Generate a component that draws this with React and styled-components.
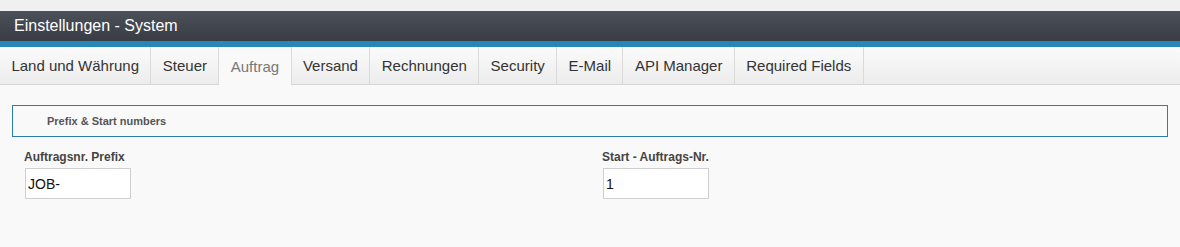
import React from "react";
import styled, { createGlobalStyle } from "styled-components";

const GlobalStyle = createGlobalStyle`
  body {
    margin: 0;
    background: #f9f9f9;
    font-family: "Liberation Sans", Arial, sans-serif;
  }
`;

const Page = styled.div`
  width: 1180px;
  height: 247px;
  background: #f9f9f9;
  overflow: hidden;
`;

const TopStrip = styled.div`
  height: 11px;
  background: #f0f0f0;
`;

const Header = styled.div`
  height: 30px;
  background: linear-gradient(#4c5059, #383c44);
  border-bottom: 6px solid #2588b8;
  color: #fff;
  font-size: 16px;
  display: flex;
  align-items: center;
  padding-left: 14px;
`;

const TabBar = styled.div`
  display: flex;
  height: 37px;
  background: linear-gradient(#fbfbfb, #ececec);
  border-bottom: 1px solid #d6d6d6;
`;

const Tab = styled.div`
  display: flex;
  align-items: center;
  padding: 0 11.4px;
  font-size: 15px;
  color: ${(p) => (p.$active ? "#777" : "#333")};
  background: ${(p) => (p.$active ? "#f9f9f9" : "transparent")};
  border-right: 1px solid #dadada;
  margin-bottom: ${(p) => (p.$active ? "-1px" : "0")};
  cursor: pointer;
`;

const Content = styled.div`
  padding: 20px 12px 0 12px;
`;

const Section = styled.div`
  height: 30px;
  border: 1px solid #2a80ad;
  display: flex;
  align-items: center;
  padding-left: 34px;
  font-size: 11px;
  font-weight: bold;
  color: #555;
`;

const Fields = styled.div`
  display: grid;
  grid-template-columns: 1fr 1fr;
  padding-top: 13px;
`;

const Field = styled.div`
  padding-left: 12px;
`;

const Label = styled.div`
  font-size: 12px;
  font-weight: bold;
  color: #444;
  margin-bottom: 4px;
`;

const Input = styled.input`
  box-sizing: border-box;
  width: 106px;
  height: 31px;
  margin-left: 1px;
  border: 1px solid #cfcfcf;
  background: #fff;
  font-family: "Liberation Sans", Arial, sans-serif;
  font-size: 14px;
  color: #111;
  padding: 0 2px;
  outline: none;
`;

const tabs = [
  "Land und Währung",
  "Steuer",
  "Auftrag",
  "Versand",
  "Rechnungen",
  "Security",
  "E-Mail",
  "API Manager",
  "Required Fields",
];

export default function App() {
  return (
    <Page>
      <GlobalStyle />
      <TopStrip />
      <Header>Einstellungen - System</Header>
      <TabBar>
        {tabs.map((t) => (
          <Tab key={t} $active={t === "Auftrag"}>
            {t}
          </Tab>
        ))}
      </TabBar>
      <Content>
        <Section>Prefix &amp; Start numbers</Section>
        <Fields>
          <Field>
            <Label>Auftragsnr. Prefix</Label>
            <Input defaultValue="JOB-" />
          </Field>
          <Field>
            <Label>Start - Auftrags-Nr.</Label>
            <Input defaultValue="1" />
          </Field>
        </Fields>
      </Content>
    </Page>
  );
}
